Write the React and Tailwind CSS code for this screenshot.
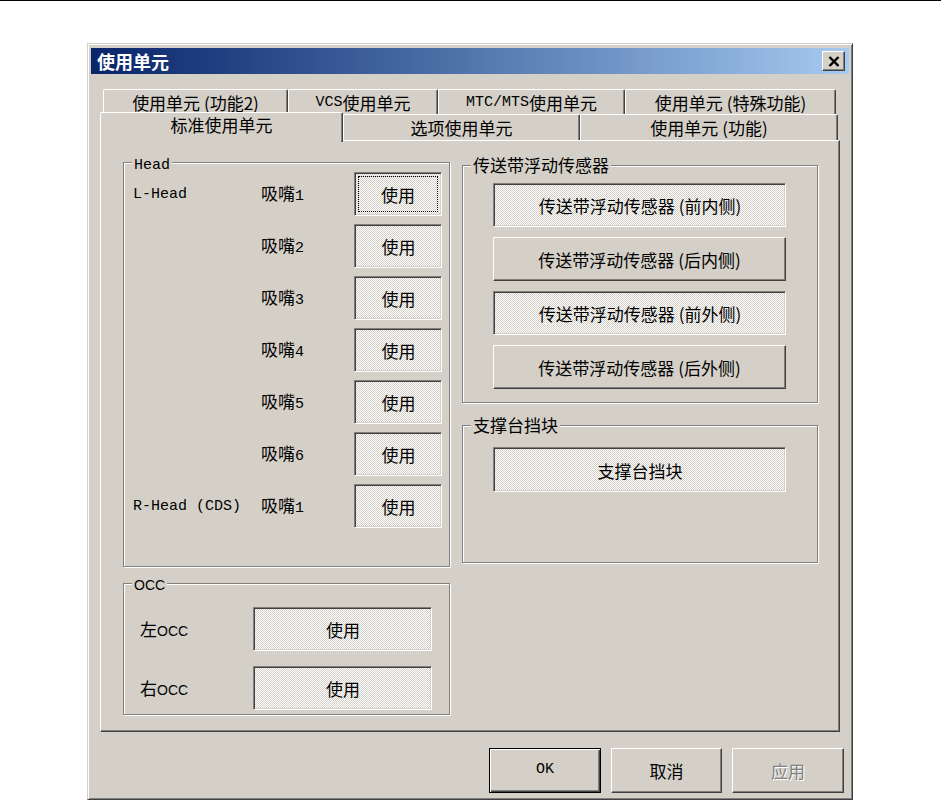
import React from 'react'

const RAISED =
  'border border-t-white border-l-white border-r-[#404040] border-b-[#404040] shadow-[inset_-1px_-1px_0_#808080] bg-[#d4d0c8]'
const SUNKEN =
  'border border-t-[#808080] border-l-[#808080] border-r-white border-b-white shadow-[inset_1px_1px_0_#404040,inset_-1px_-1px_0_#d4d0c8] bg-[image:repeating-conic-gradient(#ffffff_0%_25%,#d4d0c8_0%_50%)] bg-[length:2px_2px]'
const MONO = "font-['Liberation_Mono',monospace] text-[15px]"

const Btn = ({ pressed, focus, className = '', children }) => (
  <button
    className={`flex items-center justify-center shrink-0 leading-none ${pressed ? SUNKEN : RAISED} ${className}`}
  >
    {focus ? (
      <span className="m-[3px] self-stretch flex-1 flex items-center justify-center border border-dotted border-black">
        {children}
      </span>
    ) : (
      <span className={pressed ? 'pt-px pl-px' : ''}>{children}</span>
    )}
  </button>
)

const Group = ({ legend, className = '', children }) => (
  <div className={`relative border border-[#808080] shadow-[inset_1px_1px_0_#fff,1px_1px_0_#fff] ${className}`}>
    <span className="absolute -top-[11px] left-[8px] px-[2px] bg-[#d4d0c8] leading-[20px]">{legend}</span>
    {children}
  </div>
)

const Tab = ({ className = '', children }) => (
  <div
    className={`flex items-center justify-center leading-none border-t border-l border-r border-t-white border-l-white border-r-[#404040] shadow-[inset_-1px_0_0_#808080] rounded-t-[2px] bg-[#d4d0c8] ${className}`}
  >
    {children}
  </div>
)

const NOZZLES = ['1', '2', '3', '4', '5', '6']

const SENSORS = [
  { label: '前内侧', pressed: true },
  { label: '后内侧', pressed: false },
  { label: '前外侧', pressed: true },
  { label: '后外侧', pressed: false },
]

export default function App() {
  return (
    <div className="min-h-[801px] bg-white font-['Noto_Sans_CJK_SC',sans-serif] text-[17px] text-black overflow-hidden">
      <div className="h-px bg-black" />

      {/* dialog window */}
      <div className="ml-[87px] mt-[42px] w-[766px] h-[757px] flex flex-col px-[3px] pt-[4px] bg-[#d4d0c8] border border-t-[#d4d0c8] border-l-[#d4d0c8] border-r-[#404040] border-b-[#404040] shadow-[inset_1px_1px_0_#fff,inset_-1px_-1px_0_#808080]">
        {/* title bar */}
        <div className="h-[26px] flex items-center pl-[6px] bg-linear-to-r from-[#0a246a] to-[#a6caf0]">
          <span className="text-white font-bold text-[18px] leading-none">使用单元</span>
          <button className={`ml-auto mr-[4px] w-[23px] h-[20px] flex items-center justify-center ${RAISED}`}>
            <svg width="12" height="11" viewBox="0 0 12 11">
              <path d="M1.5 1 L10.5 10 M10.5 1 L1.5 10" stroke="#000" strokeWidth="2.4" />
            </svg>
          </button>
        </div>

        {/* tab control */}
        <div className="ml-[9px] mt-[15px] w-[740px]">
          <div className="h-[25px] flex pl-[3px]">
            <Tab className="w-[185px]">使用单元 (功能2)</Tab>
            <Tab className="w-[150px]">
              <span className={`${MONO} leading-none`}>VCS</span>使用单元
            </Tab>
            <Tab className="w-[187px]">
              <span className={`${MONO} leading-none`}>MTC/MTS</span>使用单元
            </Tab>
            <Tab className="w-[211px]">使用单元 (特殊功能)</Tab>
          </div>
          <div className="h-[26px] flex items-end">
            <Tab className="relative z-10 w-[243px] h-[30px] -mb-[2px] pb-[6px]">标准使用单元</Tab>
            <Tab className="w-[237px] h-full">选项使用单元</Tab>
            <Tab className="w-[258px] h-full">使用单元 (功能)</Tab>
          </div>

          {/* panel */}
          <div className="h-[592px] flex pl-[22px] pt-[21px] border border-t-white border-l-white border-r-[#404040] border-b-[#404040] shadow-[inset_-1px_-1px_0_#808080]">
            <div className="w-[327px] flex flex-col">
              <Group legend={<span className={MONO}>Head</span>} className="h-[405px] pt-[9px] pl-[9px]">
                {NOZZLES.map((n, i) => (
                  <div key={n} className="h-[44px] mb-[8px] flex items-center">
                    <span className={`w-[128px] pt-[2px] ${MONO}`}>{i === 0 ? 'L-Head' : ''}</span>
                    <span className="w-[93px] flex items-baseline">
                      吸嘴<span className={MONO}>{n}</span>
                    </span>
                    <Btn pressed focus={i === 0} className="w-[88px] h-[44px]">
                      使用
                    </Btn>
                  </div>
                ))}
                <div className="h-[44px] mt-[1px] flex items-center">
                  <span className={`w-[128px] pt-[2px] ${MONO}`}>R-Head (CDS)</span>
                  <span className="w-[93px] flex items-baseline">
                    吸嘴<span className={MONO}>1</span>
                  </span>
                  <Btn pressed className="w-[88px] h-[44px]">
                    使用
                  </Btn>
                </div>
              </Group>

              <Group
                legend={<span className="font-['Liberation_Sans',sans-serif] text-[14px]">OCC</span>}
                className="mt-[16px] h-[132px] pt-[23px] pl-[16px]"
              >
                {['左', '右'].map((side) => (
                  <div key={side} className="h-[44px] mb-[15px] flex items-center">
                    <span className="w-[113px] flex items-baseline">
                      {side}
                      <span className="font-['Liberation_Sans',sans-serif] text-[14px]">OCC</span>
                    </span>
                    <Btn pressed className="w-[179px] h-[44px]">
                      使用
                    </Btn>
                  </div>
                ))}
              </Group>
            </div>

            <div className="ml-[12px] w-[356px] pt-[3px] flex flex-col">
              <Group legend="传送带浮动传感器" className="h-[238px] pt-[17px] pl-[30px]">
                {SENSORS.map((s) => (
                  <Btn key={s.label} pressed={s.pressed} className="w-[293px] h-[44px] mb-[10px]">
                    传送带浮动传感器 ({s.label})
                  </Btn>
                ))}
              </Group>
              <Group legend="支撑台挡块" className="mt-[22px] h-[138px] pt-[21px] pl-[30px]">
                <Btn pressed className="w-[293px] h-[45px]">
                  支撑台挡块
                </Btn>
              </Group>
            </div>
          </div>
        </div>

        {/* dialog buttons */}
        <div className="mt-[16px] mr-[5px] flex justify-end gap-[10px]">
          <button className="w-[112px] h-[45px] flex items-center justify-center border border-black shadow-[inset_1px_1px_0_#fff,inset_-1px_-1px_0_#404040,inset_-2px_-2px_0_#808080] bg-[#d4d0c8]">
            <span className={MONO}>OK</span>
          </button>
          <Btn className="w-[111px] h-[45px]">取消</Btn>
          <Btn className="w-[112px] h-[45px]">
            <span className="text-[#808080] [text-shadow:1px_1px_0_#fff]">应用</span>
          </Btn>
        </div>
      </div>
    </div>
  )
}
